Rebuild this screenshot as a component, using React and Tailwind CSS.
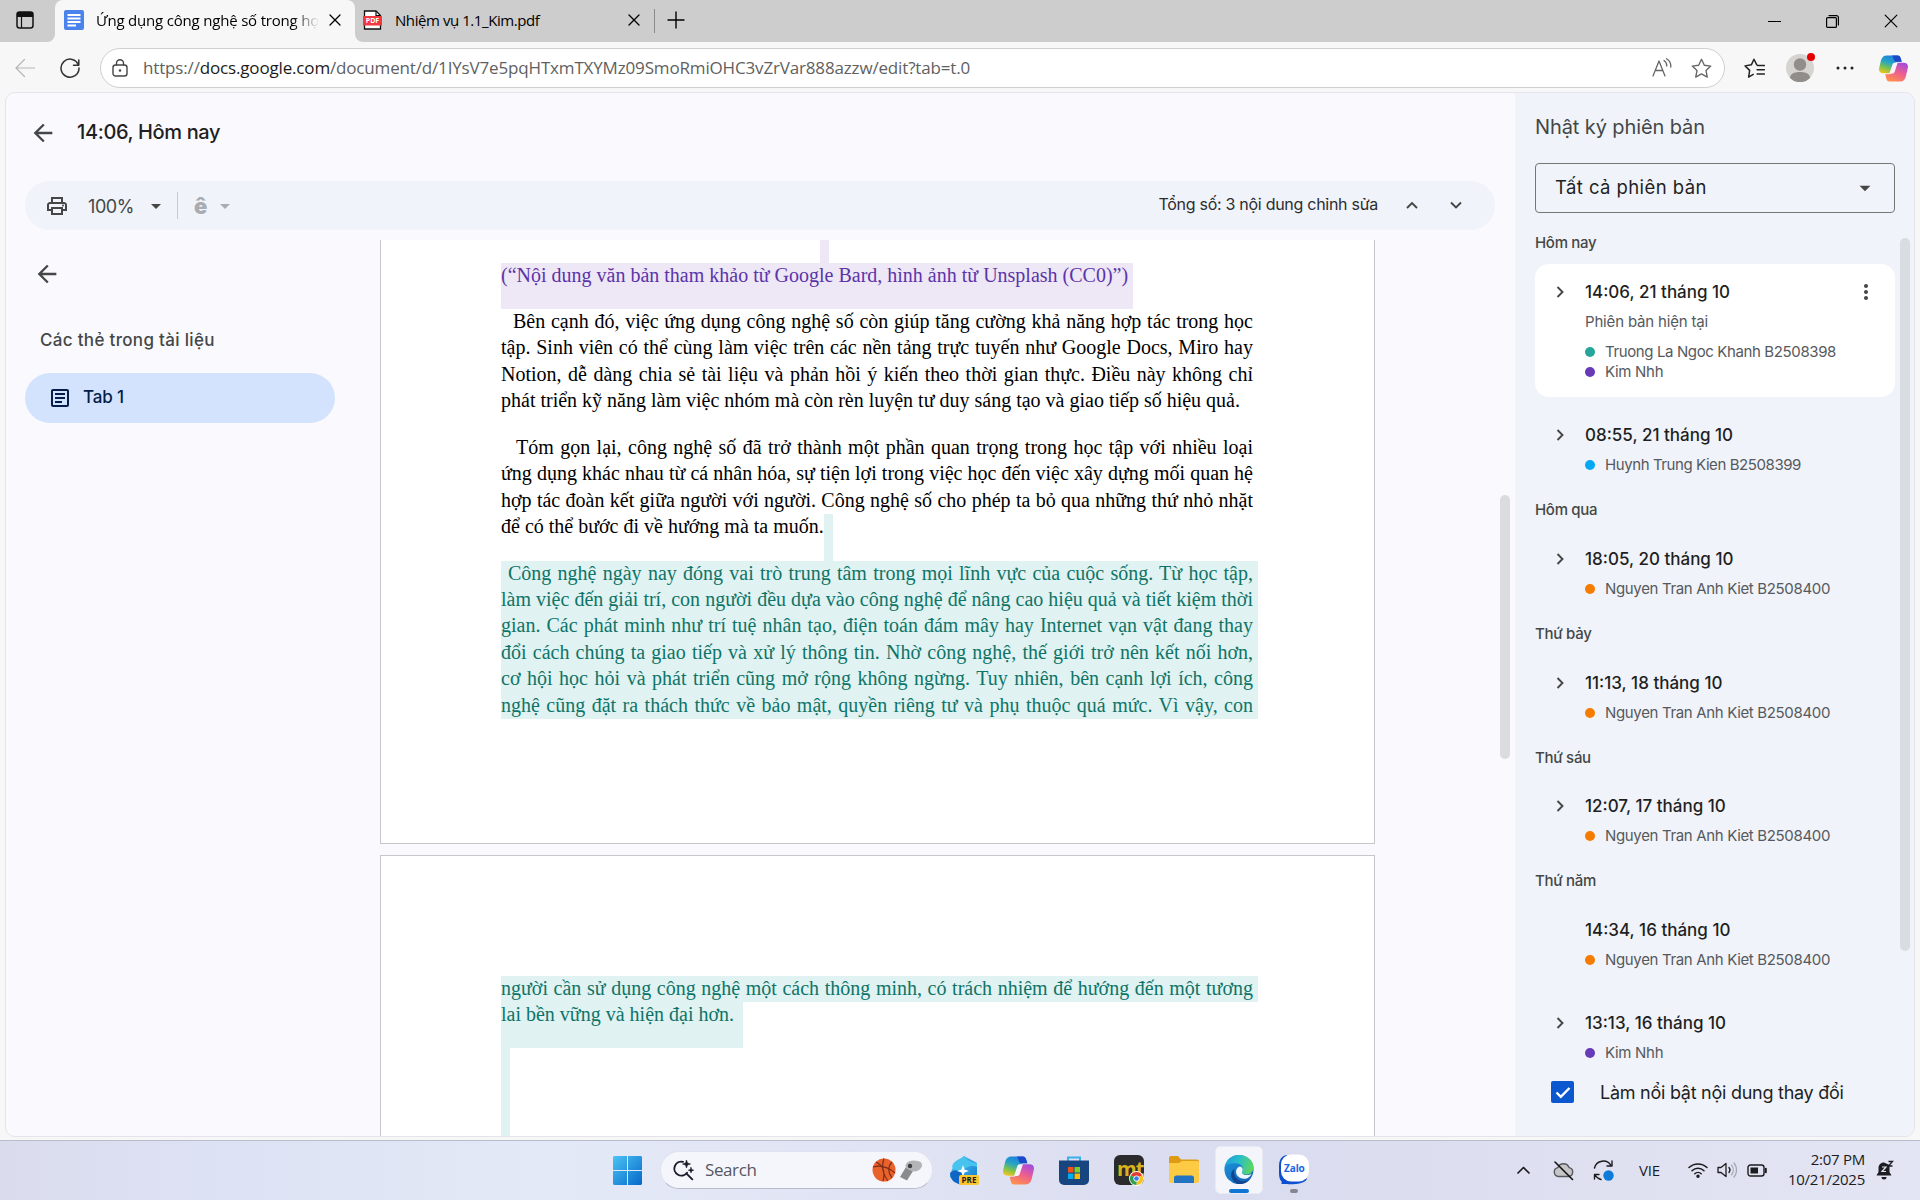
import React from "react";
import {
  MdArrowBack,
  MdArrowDropDown,
  MdMoreVert,
  MdOutlineArticle,
  MdOutlinePrint,
} from "react-icons/md";

const Svg = ({ w = 20, h, vb = "0 0 20 20", className = "", children, sw = 1.3 }) => (
  <svg
    width={w}
    height={h ?? w}
    viewBox={vb}
    fill="none"
    stroke="currentColor"
    strokeWidth={sw}
    strokeLinecap="round"
    strokeLinejoin="round"
    className={"shrink-0 " + className}
  >
    {children}
  </svg>
);

const Cross = ({ size, sw = 1.3, className }) => (
  <Svg w={size} vb="0 0 12 12" sw={sw} className={className}>
    <path d="M1 1l10 10M11 1L1 11" />
  </Svg>
);

const Chevron = ({ d, className = "" }) => (
  <Svg w={14} vb="0 0 14 14" sw={1.9} className={className}>
    <path d={d} strokeLinecap="butt" strokeLinejoin="miter" />
  </Svg>
);

function CopilotLogo({ size, id }) {
  return (
    <svg width={size} height={size} viewBox="0 0 30 30" className="shrink-0">
      <defs>
        <linearGradient id={id + "a"} x1="0.6" y1="0" x2="0.2" y2="1">
          <stop offset="0" stopColor="#1b7fe0" />
          <stop offset="0.4" stopColor="#27a5c4" />
          <stop offset="0.7" stopColor="#7cc24e" />
          <stop offset="1" stopColor="#f3c51c" />
        </linearGradient>
        <linearGradient id={id + "b"} x1="0.8" y1="0" x2="0.3" y2="1">
          <stop offset="0" stopColor="#a24be0" />
          <stop offset="0.5" stopColor="#ee5f8e" />
          <stop offset="1" stopColor="#ff8f4d" />
        </linearGradient>
      </defs>
      <path d="M13 1.500h6.200c2 0 2.700 1.300 3.300 3.200l1 3.300h-3.700c-2 0-3 .8-3.600 2.600L13 20H4.500c-3.500 0-5-2-4.300-5.500l2-8.500C3.500 3 5 1.500 8 1.500z" fill={`url(#${id}a)`} />
      <path d="M13 1.500h6.200c2 0 2.700 1.300 3.300 3.200l1 3.300h-5.500c-2 0-2.500-1.500-3-3.300-.5-1.900-1-3.200-2-3.200z" fill="#1c48c9" />
      <path d="M17 28.500h-6.200c-2 0-2.700-1.300-3.300-3.200L6.500 21h3.700c2 0 3-.8 3.600-2.600L17 9h8.500c3.500 0 5 2 4.300 5.500l-2 8.500c-.8 3.500-2.800 5.500-5.800 5.500z" fill={`url(#${id}b)`} />
      <path d="M13.800 11c.4-1.300 1.200-2 2.500-2h3L16.200 18.400c-.4 1.200-1.200 1.900-2.500 1.900h-3z" fill="#f7f2fb" />
    </svg>
  );
}

function TabStrip() {
  return (
    <div className="flex h-[42px] shrink-0 items-center bg-[#cdcdcd] text-black">
      <div className="h-full w-[55px] bg-[#f7f7f7]">
        <div className="flex h-full items-center rounded-br-[8px] bg-[#cdcdcd] pb-[2px] pl-4">
          <svg width="18" height="18" viewBox="0 0 18 18">
            <rect x="1" y="1" width="16" height="16" rx="2.500" fill="none" stroke="#111" strokeWidth="1.500" />
            <path d="M1 3.500A2.500 2.500 0 0 1 3.500 1h11A2.500 2.500 0 0 1 17 3.500V6H1z" fill="#111" />
            <path d="M5.500 5v12" stroke="#111" strokeWidth="1.200" />
          </svg>
        </div>
      </div>
      <div className="h-full w-[300px] bg-[#cdcdcd]">
        <div className="flex h-full items-center rounded-t-[8px] bg-[#f7f7f7] pb-[2px] pl-[9px]">
          <svg width="20" height="20" viewBox="0 0 20 20" className="shrink-0">
            <rect width="20" height="20" rx="2" fill="#4a83ec" />
            <path d="M3.500 5h13M3.500 8.500h13M3.500 12h13M3.500 15.500h8.500" stroke="#fff" strokeWidth="1.800" />
          </svg>
          <div className="ml-[12px] w-[223px] overflow-hidden whitespace-nowrap text-[15px] leading-6 tracking-[-0.19px] [mask-image:linear-gradient(to_right,#000_88%,transparent)]">
            Ứng dụng công nghệ số trong họ
          </div>
          <Cross size={12} className="ml-[10px]" />
        </div>
      </div>
      <div className="h-full w-[299px] bg-[#f7f7f7]">
        <div className="flex h-full items-center rounded-bl-[8px] bg-[#cdcdcd] pb-[2px] pl-2">
          <div className="relative h-5 w-[19px] shrink-0">
            <svg width="19" height="20" viewBox="0 0 19 20">
              <path d="M1.500 1h11.500l4.500 4.500V19h-16z" fill="#fff" stroke="#111" strokeWidth="1.300" />
              <path d="M13 1v4.500h4.500" fill="none" stroke="#111" strokeWidth="1.200" />
              <rect x="0" y="6" width="19" height="9.500" fill="#f0383e" />
            </svg>
            <span className="absolute left-0 top-[6px] w-[19px] text-center text-[7px] font-bold leading-[10px] text-white">PDF</span>
          </div>
          <span className="ml-[13px] w-[230px] whitespace-nowrap text-[15px] leading-6 tracking-[-0.43px]">Nhiệm vụ 1.1_Kim.pdf</span>
          <Cross size={12} className="ml-[3px]" />
        </div>
      </div>
      <div className="h-6 w-px bg-[#8a8a8a]" />
      <Svg w={18} vb="0 0 18 18" className="mb-[2px] ml-[12px]" sw={1.4}>
        <path d="M9 1v16M1 9h16" />
      </Svg>
      <div className="ml-auto flex items-center gap-[45px] pr-[22px]">
        <Svg w={13} vb="0 0 13 13" sw={1.2}>
          <path d="M0 6.500h13" />
        </Svg>
        <Svg w={13} vb="0 0 13 13" sw={1.2}>
          <rect x="0.600" y="2.600" width="9.800" height="9.800" rx="1" />
          <path d="M3 .6h7.400a2 2 0 0 1 2 2V10" />
        </Svg>
        <Cross size={14} sw={1} />
      </div>
    </div>
  );
}

function AddressRow() {
  return (
    <div className="flex h-[50px] shrink-0 items-center bg-[#f7f7f7] pt-[2px]">
      <Svg w={20} className="ml-[15px] text-[#b5b5b5]" sw={1.2}>
        <path d="M19.500 10H1M9.500 1.500L1 10l8.500 8.500" />
      </Svg>
      <Svg w={20} className="ml-[25px] text-[#333]" sw={1.5}>
        <path d="M18.500 7.200A9 9 0 1 0 19 10M18.800 2v5.300h-5.300" />
      </Svg>
      <div className="ml-[20px] flex h-[40px] w-[1625px] items-center rounded-full border border-[#cfcfcf] bg-white pl-[11px] pr-[12px]">
        <Svg w={16} h={18} vb="0 0 16 18" className="text-[#444]" sw={1.4}>
          <rect x="1" y="6" width="14" height="11" rx="2.500" />
          <path d="M4.500 6V4.200a3.500 3.500 0 0 1 7 0V6" />
          <circle cx="8" cy="11.500" r=".6" fill="currentColor" />
        </Svg>
        <div className="ml-[15px] whitespace-nowrap text-[17px] leading-6 tracking-[-0.16px] text-[#5f5f5f]">
          https://<span className="text-[#1b1b1b]">docs.google.com</span>/document/d/1IYsV7e5pqHTxmTXYMz09SmoRmiOHC3vZrVar888azzw/edit?tab=t.0
        </div>
        <Svg w={20} className="ml-auto text-[#666]">
          <path d="M1 18L7 3l6 15M3.200 12.500h7.600M12 2.500c1.800 1 2.800 3 2.800 5.500M14.500 .8C17.500 2.500 19 5.500 18.800 9" />
        </Svg>
        <Svg w={21} className="ml-[19px] text-[#666]">
          <path d="M10 1.200l2.700 5.700 6.100.8-4.500 4.300 1.200 6.200L10 15.200l-5.500 3 1.200-6.200L1.200 7.700l6.100-.8z" />
        </Svg>
      </div>
      <Svg w={21} className="ml-[19px] text-[#222]" sw={1.4}>
        <path d="M12.200 6.500L9.500 1.200 7 6.500l-6 1 4.400 4.300-1 6.400 4.400-2.600M13 7.200h6.500M12.500 11.200h7M12.500 15.200h7" />
      </Svg>
      <div className="relative ml-[21px] h-7 w-7 shrink-0">
        <svg width="28" height="28" viewBox="0 0 28 28">
          <circle cx="14" cy="14" r="14" fill="#d6d4d1" />
          <circle cx="14" cy="10.500" r="6.200" fill="#908d8a" />
          <path d="M4 24c0-4 4-6 10-6s10 2 10 6a14 14 0 0 1-20 0z" fill="#908d8a" />
        </svg>
        <span className="absolute -top-px right-[-1px] h-2 w-2 rounded-full bg-[#e60000]" />
      </div>
      <svg width="18" height="4" viewBox="0 0 18 4" className="ml-[22px] shrink-0">
        <circle cx="2" cy="2" r="1.500" fill="#222" />
        <circle cx="9" cy="2" r="1.500" fill="#222" />
        <circle cx="16" cy="2" r="1.500" fill="#222" />
      </svg>
      <div className="ml-[25px]">
        <CopilotLogo size={29} id="ca" />
      </div>
    </div>
  );
}

function DocToolbar() {
  return (
    <div className="ml-[19px] flex h-[49px] w-[1470px] shrink-0 items-center rounded-full bg-[#f0f3f9] text-[#444746]">
      <MdOutlinePrint className="ml-[20px] text-[24px]" />
      <span className="ml-[19px] mt-px text-[18px] tracking-[-0.42px]">100%</span>
      <MdArrowDropDown className="ml-[10px] text-[24px]" />
      <div className="ml-[9px] h-[27px] w-px bg-[#c7cacf]" />
      <span className="ml-[16px] text-[22px] font-black leading-none text-[#a9acb1]">ê</span>
      <MdArrowDropDown className="ml-[6px] text-[24px] text-[#a9acb1]" />
      <span className="ml-auto mb-[4px] text-[16px] tracking-[-0.28px] text-[#2b2d30]">Tổng số: 3 nội dung chỉnh sửa</span>
      <Chevron className="mb-[2px] ml-[27px]" d="M2 10L7 5l5 5" />
      <Chevron className="mb-[2px] ml-[30px] mr-[32px]" d="M2 4.500l5 5 5-5" />
    </div>
  );
}

const paraOne = [
  "Bên cạnh đó, việc ứng dụng công nghệ số còn giúp tăng cường khả năng hợp tác trong học",
  "tập. Sinh viên có thể cùng làm việc trên các nền tảng trực tuyến như Google Docs, Miro hay",
  "Notion, dễ dàng chia sẻ tài liệu và phản hồi ý kiến theo thời gian thực. Điều này không chỉ",
];
const paraTwo = [
  "Tóm gọn lại, công nghệ số đã trở thành một phần quan trọng trong học tập với nhiều loại",
  "ứng dụng khác nhau từ cá nhân hóa, sự tiện lợi trong việc học đến việc xây dựng mối quan hệ",
  "hợp tác đoàn kết giữa người với người. Công nghệ số cho phép ta bỏ qua những thứ nhỏ nhặt",
];
const paraThree = [
  "Công nghệ ngày nay đóng vai trò trung tâm trong mọi lĩnh vực của cuộc sống. Từ học tập,",
  "làm việc đến giải trí, con người đều dựa vào công nghệ để nâng cao hiệu quả và tiết kiệm thời",
  "gian. Các phát minh như trí tuệ nhân tạo, điện toán đám mây hay Internet vạn vật đang thay",
  "đổi cách chúng ta giao tiếp và xử lý thông tin. Nhờ công nghệ, thế giới trở nên kết nối hơn,",
  "cơ hội học hỏi và phát triển cũng mở rộng không ngừng. Tuy nhiên, bên cạnh lợi ích, công",
  "nghệ cũng đặt ra thách thức về bảo mật, quyền riêng tư và phụ thuộc quá mức. Vì vậy, con",
];

const Line = ({ children, className = "" }) => (
  <div className={"h-[26.45px] w-[752px] whitespace-nowrap leading-[24.5px] [text-align-last:justify] " + className}>{children}</div>
);

function Document() {
  return (
    <div className="flex h-[896px] w-[995px] shrink-0 flex-col gap-[11px] overflow-hidden font-['Liberation_Serif',serif] text-[20px] leading-[24.5px] text-black">
      <div className="h-[604px] shrink-0 border border-t-0 border-[#c4c7cc] bg-white pl-[120px]">
        <div className="ml-[319px] h-[23px] w-[9px] bg-[#ede7f6]" />
        <div className="h-[46px] w-[632px] whitespace-nowrap bg-[#ede7f6] text-[#5b34a8]">
          (“Nội dung văn bản tham khảo từ Google Bard, hình ảnh từ Unsplash (CC0)”)
        </div>
        {paraOne.map((t, i) => (
          <Line key={t} className={i === 0 ? "pl-[12px]" : ""}>{t}</Line>
        ))}
        <div className="h-[26.45px] whitespace-nowrap">phát triển kỹ năng làm việc nhóm mà còn rèn luyện tư duy sáng tạo và giao tiếp số hiệu quả.</div>
        <div className="h-5" />
        {paraTwo.map((t, i) => (
          <Line key={t} className={i === 0 ? "pl-[15px]" : ""}>{t}</Line>
        ))}
        <div className="flex h-[46.45px] whitespace-nowrap">
          <span>để có thể bước đi về hướng mà ta muốn.</span>
          <span className="w-[9px] self-stretch bg-[#e0f2f1]" />
        </div>
        <div className="w-[757px] bg-[#e0f2f1] text-[#0f7468]">
          {paraThree.map((t, i) => (
            <Line key={t} className={i === 0 ? "pl-[7px]" : ""}>{t}</Line>
          ))}
        </div>
      </div>
      <div className="h-[400px] shrink-0 border border-[#c4c7cc] bg-white pl-[120px] pt-[120px] text-[#0f7468]">
        <div className="w-[757px] bg-[#e0f2f1]">
          <Line>người cần sử dụng công nghệ một cách thông minh, có trách nhiệm để hướng đến một tương</Line>
        </div>
        <div className="h-[46px] w-[242px] whitespace-nowrap bg-[#e0f2f1]">lai bền vững và hiện đại hơn.</div>
        <div className="h-[200px] w-[9px] bg-[#e0f2f1]" />
      </div>
    </div>
  );
}

const sections = [
  {
    label: "Hôm nay",
    items: [
      { time: "14:06, 21 tháng 10", current: true, people: [["Truong La Ngoc Khanh B2508398", "bg-[#26a69a]", "tracking-[-0.38px]"], ["Kim Nhh", "bg-[#673ab7]", "tracking-[-0.3px]"]] },
      { time: "08:55, 21 tháng 10", people: [["Huynh Trung Kien B2508399", "bg-[#03a9f4]", "tracking-[-0.42px]"]] },
    ],
  },
  { label: "Hôm qua", items: [{ time: "18:05, 20 tháng 10", people: [["Nguyen Tran Anh Kiet B2508400", "bg-[#f57c00]", "tracking-[-0.34px]"]] }] },
  { label: "Thứ bảy", items: [{ time: "11:13, 18 tháng 10", people: [["Nguyen Tran Anh Kiet B2508400", "bg-[#f57c00]", "tracking-[-0.34px]"]] }] },
  { label: "Thứ sáu", items: [{ time: "12:07, 17 tháng 10", people: [["Nguyen Tran Anh Kiet B2508400", "bg-[#f57c00]", "tracking-[-0.34px]"]] }] },
  {
    label: "Thứ năm",
    items: [
      { time: "14:34, 16 tháng 10", leaf: true, people: [["Nguyen Tran Anh Kiet B2508400", "bg-[#f57c00]", "tracking-[-0.34px]"]] },
      { time: "13:13, 16 tháng 10", people: [["Kim Nhh", "bg-[#673ab7]", "tracking-[-0.3px]"]] },
    ],
  },
];

function Version({ v }) {
  return (
    <div className={"w-[360px] rounded-[14px] pl-[18px] pt-[16px] " + (v.current ? "h-[133px] bg-white" : "h-[82.300px]")}>
      <div className="flex h-6 items-center">
        {v.leaf ? <span className="w-[14px]" /> : <Chevron className="text-[#444746]" d="M4.500 2L9.500 7l-5 5" />}
        <span className="ml-[18px] text-[17px] font-medium leading-6 text-[#1f1f1f]">{v.time}</span>
        {v.current && <MdMoreVert className="ml-auto mr-[17px] text-[24px] text-[#444746]" />}
      </div>
      <div className="pl-[32px] pt-[8px] text-[15px] leading-5 text-[#56595d]">
        {v.current && <div className="mb-[10px] tracking-[-0.17px]">Phiên bản hiện tại</div>}
        {v.people.map(([name, dot, track]) => (
          <div key={name} className="flex h-5 items-center gap-[10px]">
            <span className={"h-[10px] w-[10px] rounded-full " + dot} />
            <span className={track}>{name}</span>
          </div>
        ))}
      </div>
    </div>
  );
}

function HistoryPanel() {
  return (
    <aside className="flex h-full w-[400px] shrink-0 flex-col rounded-r-[10px] bg-[#f0f3f9] pl-[20px]">
      <div className="mt-[20px] h-7 text-[20px] leading-7 tracking-[-0.1px] text-[#444746]">Nhật ký phiên bản</div>
      <div className="mt-[22px] flex h-[50px] w-[360px] shrink-0 items-center justify-between rounded-[4px] border border-[#747775] pl-[19px] pr-[16px]">
        <span className="text-[18.500px] tracking-[0.42px] text-[#1f1f1f]">Tất cả phiên bản</span>
        <MdArrowDropDown className="text-[26px] text-[#444746]" />
      </div>
      <div className="mt-[20px] flex h-[845px] shrink-0">
        <div className="flex w-[364px] flex-col gap-[10.700px]">
          {sections.map((s) => (
            <React.Fragment key={s.label}>
              <div className="h-5 shrink-0 text-[15px] font-medium leading-5 tracking-[-0.3px] text-[#444746]">{s.label}</div>
              {s.items.map((v) => (
                <Version key={v.time} v={v} />
              ))}
            </React.Fragment>
          ))}
        </div>
        <div className="ml-px mt-[5px] h-[713px] w-[10px] rounded-full bg-[#d9dce1]" />
      </div>
      <div className="ml-[16px] mt-[2px] flex h-[24px] items-center">
        <span className="flex h-[22px] w-[23px] items-center justify-center rounded-[2px] bg-[#0b57d0] text-white">
          <Svg w={18} vb="0 0 18 18" sw={2.4}>
            <path d="M2.500 9.500l4.300 4.300L15.500 5" strokeLinecap="butt" strokeLinejoin="miter" />
          </Svg>
        </span>
        <span className="ml-[26px] text-[18px] tracking-[-0.26px] text-[#1f1f1f]">Làm nổi bật nội dung thay đổi</span>
      </div>
    </aside>
  );
}

function StartIcon() {
  return (
    <svg width="29" height="29" viewBox="0 0 29 29">
      <defs>
        <linearGradient id="win" x1="0" y1="0" x2="1" y2="1">
          <stop offset="0" stopColor="#4cc4f5" />
          <stop offset="1" stopColor="#0567c9" />
        </linearGradient>
      </defs>
      <path d="M1 0h13v14H0V1zM15 0h13l1 1v13H15zM0 15h14v14H1l-1-1zM15 15h14v13l-1 1H15z" fill="url(#win)" />
    </svg>
  );
}

function EdgeIcon() {
  return (
    <svg width="30" height="30" viewBox="0 0 30 30">
      <defs>
        <linearGradient id="eg1" x1="0" y1="0.300" x2="1" y2="0.500">
          <stop offset="0" stopColor="#1c9fe0" />
          <stop offset="0.500" stopColor="#2bc0c4" />
          <stop offset="1" stopColor="#5fd75a" />
        </linearGradient>
        <linearGradient id="eg2" x1="0" y1="0" x2="0.800" y2="1">
          <stop offset="0" stopColor="#1b9be0" />
          <stop offset="1" stopColor="#1560b8" />
        </linearGradient>
      </defs>
      <circle cx="15" cy="15" r="15" fill="url(#eg2)" />
      <path d="M.3 12.500C1.500 5 7.500 0 15 0c8.500 0 15 6 15 12.500 0 4.500-3.500 7.500-7.500 7.500-3 0-5-1.200-4.500-2.500 2-2.200 1.500-7-3.500-8.500C8 7.500 2 9.500.3 12.500z" fill="url(#eg1)" />
      <path d="M10.500 14.500c-2 5 1.500 12 8.500 12.500 3.500.2 6.500-1.200 8.500-3.500-2.500 4.500-7.500 6.800-13 6.500C9 28.500 5.500 22 7.500 17.500c.8-1.500 1.800-2.500 3-3z" fill="#10458f" />
      <path d="M18 17.500c-.5 1.500 1.500 3.200 5 3.200 2.200 0 3.700-.6 5-1.700-1 3-4 5.500-8 5.500-5 0-8.500-4-8-8 .3-2.300 1.800-4.300 4-4.700 3 .5 3.500 3.700 2 5.700z" fill="#eef6fb" />
    </svg>
  );
}

function Taskbar() {
  return (
    <div className="flex h-[60px] shrink-0 items-center border-t border-[#b9bcc9] bg-[linear-gradient(90deg,#dadced_0%,#dde2f4_12%,#e4e9f7_28%,#dfe2f3_50%,#dadcef_65%,#dee0f1_80%,#e3e5f3_100%)] pb-px text-[#1c1c1e]">
      <div className="ml-[613px]">
        <StartIcon />
      </div>
      <div className="ml-[18px] flex h-[38px] w-[273px] items-center rounded-full border border-b-[#b9bccb] border-[#dfe2ef] bg-[#f5f6fc] pl-[12px]">
        <Svg w={21} vb="0 0 21 21" sw={1.900} className="text-[#1a1a2a]">
          <path d="M10 1.800A7 7 0 1 0 14 12.800M13.800 13.800l5.500 5.500" />
          <path d="M13.500 0l1 3 3 1-3 1-1 3-1-3-3-1 3-1zM18 7.500l.7 2 2 .7-2 .7-.7 2-.7-2-2-.7 2-.7z" fill="currentColor" strokeWidth="0.600" />
        </Svg>
        <span className="ml-[11px] w-[167px] text-[17px] tracking-[-0.4px] text-[#55565e]">Search</span>
        <svg width="24" height="24" viewBox="0 0 24 24" className="shrink-0">
          <circle cx="12" cy="12" r="11.500" fill="#e8622c" />
          <path d="M12 .5C9 8 11 17 16 23M1 9c7-2 15 0 22 6M4 4c6 3 10 8 7 19M20 4c-4 4-5 9 0 16" fill="none" stroke="#7d2a17" strokeWidth="1.100" />
        </svg>
        <svg width="24" height="22" viewBox="0 0 24 22" className="ml-[3px] shrink-0">
          <path d="M1 18l6-10 7 4-6 9.500z" fill="#8b8b8e" />
          <path d="M7 5c2-4 8-4 12-3s5 4 3 7-6 4-9 3-8-3-6-7z" fill="#b4b4b7" />
          <circle cx="11" cy="7" r="2.200" fill="#3d3d42" />
        </svg>
      </div>

      <div className="relative ml-[16px] h-[31px] w-[31px]">
        <svg width="31" height="31" viewBox="0 0 31 31">
          <defs>
            <linearGradient id="m3" x1="0" y1="0" x2="1" y2="1">
              <stop offset="0" stopColor="#57d4f4" />
              <stop offset="1" stopColor="#0b74cf" />
            </linearGradient>
          </defs>
          <path d="M15 1l13 7v13l-13 9-14-8 2-8z" fill="url(#m3)" />
          <path d="M1 18c4-4 9-3 12 0l6 8-5 4C7 29 1 26 1 18z" fill="#0f66c4" />
          <path d="M15 1c-7 5-11 5-12 11 3 5 9 4 14 1 5-3 8-2 11-1V8c-5 0-9-2-13-7z" fill="#48c3ee" />
          <path d="M14 10l1.500 4.500L20 16l-4.500 1.500L14 22l-1.500-4.500L8 16l4.500-1.500z" fill="#fff" />
        </svg>
        <span className="absolute left-[10px] top-[20px] h-[10px] w-[20px] rounded-[2px] bg-[#fdc62f] text-center text-[8px] font-bold leading-[10px] text-[#1b1b1b]">PRE</span>
      </div>
      <div className="ml-[23px]">
        <CopilotLogo size={31} id="cb" />
      </div>
      <svg width="30" height="31" viewBox="0 0 30 31" className="ml-[25px] shrink-0">
        <path d="M9 6V2.500h12V6" fill="none" stroke="#39b0ea" strokeWidth="2" />
        <path d="M0 5.500h30V25a5 5 0 0 1-5 5H5a5 5 0 0 1-5-5z" fill="#17457f" />
        <path d="M9 12h5.500v5.500H9z" fill="#f1511b" />
        <path d="M15.500 12H21v5.500h-5.500z" fill="#80cc28" />
        <path d="M9 18.500h5.500V24H9z" fill="#00adef" />
        <path d="M15.500 18.500H21V24h-5.500z" fill="#fbbc09" />
      </svg>
      <div className="relative ml-[25px] h-[30px] w-[30px] rounded-[6px] bg-[#2b2b2d]">
        <span className="absolute left-[3px] top-[1px] text-[20px] font-bold leading-[26px] tracking-[-1px] text-[#d9b21c]">mt</span>
        <svg width="15" height="15" viewBox="0 0 16 16" className="absolute -bottom-px right-0">
          <circle cx="8" cy="8" r="8" fill="#fff" />
          <path d="M8 8L1.900 4.500A7 7 0 0 1 14.100 4.500z" fill="#e33b2e" />
          <path d="M8 8L14.100 4.500A7 7 0 0 1 8 15z" fill="#fbc116" />
          <path d="M8 8v7A7 7 0 0 1 1.900 4.500z" fill="#2ba24c" />
          <circle cx="8" cy="8" r="3.300" fill="#fff" />
          <circle cx="8" cy="8" r="2.500" fill="#3b7ded" />
        </svg>
      </div>
      <svg width="30" height="28" viewBox="0 0 30 28" className="ml-[25px] shrink-0">
        <path d="M0 2a2 2 0 0 1 2-2h7l3 3.500h16a2 2 0 0 1 2 2V12H0z" fill="#dd9c14" />
        <path d="M0 7h10l3-2h15a2 2 0 0 1 2 2v18a2 2 0 0 1-2 2H2a2 2 0 0 1-2-2z" fill="#fccb43" />
        <path d="M5 27v-5a2.500 2.500 0 0 1 2.500-2.500h15A2.500 2.500 0 0 1 25 22v5z" fill="#2273c2" />
      </svg>
      <div className="ml-[16px] flex h-[48px] w-[48px] shrink-0 flex-col items-center rounded-[5px] border border-[#e8eaf4] bg-[#f3f5fb] pt-[8px]">
        <EdgeIcon />
        <span className="mt-[5px] h-[4px] w-[20px] rounded-full bg-[#0f76d3]" />
      </div>
      <div className="ml-[16px] flex h-[48px] w-[30px] shrink-0 flex-col items-center pt-[8px]">
        <div className="relative h-[31px] w-[30px] shrink-0">
          <svg width="30" height="31" viewBox="0 0 30 31">
            <path d="M8 1C2 2 0 6 0 13v6c0 6 2 8 3 9-1 1-1 2 1 2 4-.2 20 2 24-5z" fill="#0e4fd0" />
            <rect x="2" y="0.500" width="28" height="27" rx="10" fill="#fff" />
          </svg>
          <span className="absolute left-[5px] top-[7px] text-[10px] font-bold leading-[14px] tracking-[-0.1px] text-[#1565e8]">Zalo</span>
        </div>
        <span className="mt-[4px] h-[4px] w-[8px] shrink-0 rounded-full bg-[#85878f]" />
      </div>

      <div className="ml-auto flex items-center pr-[26px]">
        <Svg w={13} h={8} vb="0 0 13 8" sw={1.700}>
          <path d="M1 7l5.500-5.500L12 7" />
        </Svg>
        <Svg w={21} vb="0 0 21 21" sw={1.400} className="ml-[23px]">
          <path d="M5.500 16.500a4.500 4.500 0 0 1-.6-8.900 6 6 0 0 1 11.200 0 4.500 4.500 0 0 1-.6 8.900z" fill="#c6c6c8" stroke="#55575c" />
          <path d="M2 2l17.500 17.500" stroke="#111" strokeWidth="1.600" />
        </Svg>
        <Svg w={21} vb="0 0 21 21" sw={1.400} className="ml-[19px]">
          <path d="M1.500 8A9 9 0 0 1 18 5.500M19 1v5h-5M1.500 19v-4.500H6M2 15a9.500 9.500 0 0 0 6 4.500" />
          <circle cx="15.500" cy="15.500" r="5.200" fill="#0f7bd8" stroke="none" />
        </Svg>
        <span className="ml-[25px] w-[23px] text-[15px] leading-5 tracking-[-0.16px]">VIE</span>
        <Svg w={20} h={16} vb="0 0 20 16" sw={1.500} className="ml-[26px]">
          <path d="M1 5.500a13 13 0 0 1 18 0M4 8.800a8.500 8.500 0 0 1 12 0M6.800 11.800a4.600 4.600 0 0 1 6.400 0" />
          <circle cx="10" cy="14.200" r="1" fill="currentColor" />
        </Svg>
        <Svg w={20} h={16} vb="0 0 20 16" sw={1.300} className="ml-[9px]">
          <path d="M1 5.500h3L9 1.500v13L4 10.500H1z" />
          <path d="M12 5.500a4 4 0 0 1 0 5" />
          <path d="M14.500 3.200a7.500 7.500 0 0 1 0 9.600M17 1a11 11 0 0 1 0 14" stroke="#a5a8b3" />
        </Svg>
        <Svg w={20} h={13} vb="0 0 20 13" sw={1.400} className="ml-[10px]">
          <rect x="1" y="1" width="16" height="11" rx="2.500" />
          <rect x="3.500" y="3.500" width="7.500" height="6" fill="currentColor" stroke="none" />
          <path d="M18.800 4.800v3.400" strokeWidth="2" />
        </Svg>
        <div className="ml-[18px] w-[80px] pb-[3px] text-right text-[15px] leading-[20px] tracking-[-0.26px]">
          <div>2:07 PM</div>
          <div>10/21/2025</div>
        </div>
        <svg width="18" height="20" viewBox="0 0 18 20" className="ml-[11px] shrink-0">
          <path d="M8 2.500C4.500 2.500 2.500 5 2.500 8v4L.5 15.500h15L13.500 12V5L8 2.500z" fill="#1c1c22" />
          <path d="M5.500 17h5a2.500 2.500 0 0 1-5 0z" fill="#1c1c22" />
          <path d="M6 7h4l-4 4.500h4" fill="none" stroke="#e3e5f3" strokeWidth="1.200" />
          <path d="M12.500 1.500h4l-4 4.500h4" fill="none" stroke="#1c1c22" strokeWidth="1.300" />
        </svg>
      </div>
    </div>
  );
}

export default function App() {
  return (
    <div className="flex h-[1200px] w-[1920px] flex-col overflow-hidden bg-[#f7f7f7] font-['Open_Sans','Noto_Sans',sans-serif]">
      <TabStrip />
      <AddressRow />
      <div className="mx-[5px] mb-[3px] flex h-[1045px] shrink-0 overflow-hidden rounded-[10px] border border-[#e4e5ea] bg-[#f9f9fe] font-['Inter',sans-serif]">
        <main className="flex w-[1509px] shrink-0 flex-col">
          <div className="flex h-[88px] shrink-0 items-center pb-[8px] pl-[23px]">
            <MdArrowBack className="text-[28px] text-[#444746]" />
            <span className="mb-[2px] ml-[20px] text-[20px] font-medium tracking-[-0.36px] text-[#1f1f1f]">14:06, Hôm nay</span>
          </div>
          <DocToolbar />
          <div className="mt-[10px] flex">
            <nav className="w-[374px] shrink-0">
              <MdArrowBack className="ml-[27px] mt-[20px] text-[28px] text-[#444746]" />
              <div className="ml-[34px] mt-[40px] text-[17px] font-medium leading-6 tracking-[0.32px] text-[#444746]">Các thẻ trong tài liệu</div>
              <div className="ml-[19px] mt-[21px] flex h-[50px] w-[310px] items-center rounded-full bg-[#d3e3fd] text-[#041e49]">
                <MdOutlineArticle className="ml-[23px] text-[24px]" />
                <span className="ml-[11px] text-[17px] font-medium tracking-[-0.12px]">Tab 1</span>
              </div>
            </nav>
            <Document />
            <div className="ml-[125px] mt-[255px] h-[264px] w-[10px] rounded-full bg-[#dadce0]" />
          </div>
        </main>
        <HistoryPanel />
      </div>
      <Taskbar />
    </div>
  );
}
